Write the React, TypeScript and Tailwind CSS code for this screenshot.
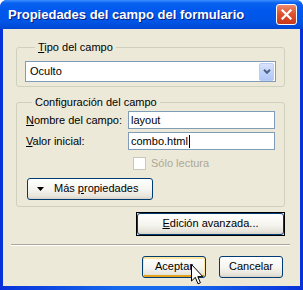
import React from 'react'

const xpButton =
  'flex items-center justify-center rounded-[3px] border border-[#003C74] bg-[linear-gradient(to_bottom,#FFFFFF_0%,#F5F4EF_55%,#E6E3DA_88%,#D6D0C5_100%)] text-[11px] text-black'

function Caret(): React.ReactElement {
  return (
    <svg width="8" height="5" viewBox="0 0 8 5" className="block">
      <path d="M1 0.8 L4 3.8 L7 0.8" fill="none" stroke="#4D6185" strokeWidth={2} />
    </svg>
  )
}

function Cursor(): React.ReactElement {
  return (
    <svg width="13" height="22" viewBox="0 0 13 22" className="block">
      <path
        d="M0.5 0.5 L0.5 17 L4.3 13.4 L7 19.8 L9.4 18.8 L6.8 12.6 L11.8 12.6 Z"
        fill="#fff"
        stroke="#000"
        strokeWidth={1}
        strokeLinejoin="miter"
      />
    </svg>
  )
}

export default function App(): React.ReactElement {
  return (
    <div
      className="relative h-[290px] w-[303px] overflow-hidden text-black"
      style={{ fontFamily: '"Liberation Sans", Arial, sans-serif' }}
    >
      <div className="flex h-full flex-col rounded-t-[7px] bg-[linear-gradient(to_right,#0831D9_0%,#166AEE_40%,#166AEE_60%,#0831D9_100%)]">
        {/* Title bar */}
        <div className="flex h-[29px] shrink-0 items-center rounded-t-[7px] bg-[linear-gradient(to_bottom,#3C8FFF_0%,#0A62F0_10%,#0058EE_35%,#0055E5_75%,#0046D3_100%)] pl-[8px] pr-[6px]">
          <span className="flex-1 text-[13px] font-bold text-white [text-shadow:1px_1px_0_#0A1E80]">
            Propiedades del campo del formulario
          </span>
          <div className="flex h-[21px] w-[21px] items-center justify-center rounded-[3px] border border-white bg-[linear-gradient(to_bottom,#E88B6E_0%,#E0532F_45%,#C8381A_100%)]">
            <svg width="11" height="11" viewBox="0 0 11 11">
              <path d="M1.5 1.5 L9.5 9.5 M9.5 1.5 L1.5 9.5" stroke="#fff" strokeWidth={2.2} strokeLinecap="square" />
            </svg>
          </div>
        </div>

        {/* Client area */}
        <div className="mx-[3px] mb-[4px] flex flex-1 flex-col bg-[#ECE9D8] pl-[13px] pr-[15px]">
          <fieldset className="mt-[12px] rounded-[3px] border border-[#D0D0BF] pb-[4px] pl-[8px] pr-[8px] pt-[7px]">
            <legend className="ml-[10px] px-[3px] text-[11px] leading-[13px]">
              <span className="underline">T</span>ipo del campo
            </legend>
            <div className="flex h-[21px] items-center border border-[#7F9DB9] bg-white">
              <span className="flex-1 pl-[4px] text-[11px]">Oculto</span>
              <div className="mr-[1px] flex h-[18px] w-[15px] items-center justify-center rounded-[2px] border border-[#B9CCF5] bg-[linear-gradient(to_bottom,#D8E3FC_0%,#C1D3FB_50%,#B2C6F5_100%)]">
                <Caret />
              </div>
            </div>
          </fieldset>

          <fieldset className="mt-[9px] rounded-[3px] border border-[#D0D0BF] pb-[6px] pl-[9px] pr-[9px] pt-[2px]">
            <legend className="ml-[6px] px-[3px] text-[11px] leading-[13px]">Configuración del campo</legend>
            <div className="flex flex-col gap-[3px]">
              <div className="flex items-center">
                <span className="w-[102px] text-[11px]">
                  <span className="underline">N</span>ombre del campo:
                </span>
                <div className="flex h-[18px] w-[147px] items-center border border-[#7F9DB9] bg-white pl-[2px] text-[11px]">
                  layout
                </div>
              </div>
              <div className="flex items-center">
                <span className="w-[102px] text-[11px]">
                  <span className="underline">V</span>alor inicial:
                </span>
                <div className="flex h-[18px] w-[147px] items-center border border-[#7F9DB9] bg-white pl-[2px] text-[11px]">
                  combo.html<span className="ml-[1px] h-[13px] w-px bg-black" />
                </div>
              </div>
            </div>
            <div className="mt-[5px] flex items-center pl-[107px]">
              <div className="h-[13px] w-[13px] border border-[#CAC8BB] bg-white" />
              <span className="ml-[5px] text-[11px] text-[#ACA899]">Sólo lectura</span>
            </div>
            <div className={`${xpButton} ml-[1px] mt-[6px] h-[22px] w-[126px] justify-start`}>
              <svg width="7" height="4" viewBox="0 0 7 4" className="ml-[9px] block">
                <path d="M0 0 L7 0 L3.5 4 Z" fill="#000" />
              </svg>
              <span className="ml-[10px]">
                Más <span className="underline">p</span>ropiedades
              </span>
            </div>
          </fieldset>

          <div className="mt-[5px] self-end border border-black">
            <div className={`${xpButton} h-[22px] w-[147px]`}>
              <span>
                <span className="underline">E</span>dición avanzada...
              </span>
            </div>
          </div>

          <div className="-ml-[5px] -mr-[5px] mt-[8px] h-[2px] border-t border-[#ACA899] bg-white" />

          <div className="mr-[2px] mt-[10px] flex justify-end gap-[13px]">
            <div className={`${xpButton} h-[22px] w-[64px] shadow-[inset_0_1px_0_1px_#FFE7A2,inset_0_-1px_0_1px_#E5A01A]`}>
              Aceptar
            </div>
            <div className={`${xpButton} h-[22px] w-[64px]`}>Cancelar</div>
          </div>
        </div>
      </div>

      {/* Mouse pointer */}
      <div className="absolute left-[191px] top-[264px]">
        <Cursor />
      </div>
    </div>
  )
}
